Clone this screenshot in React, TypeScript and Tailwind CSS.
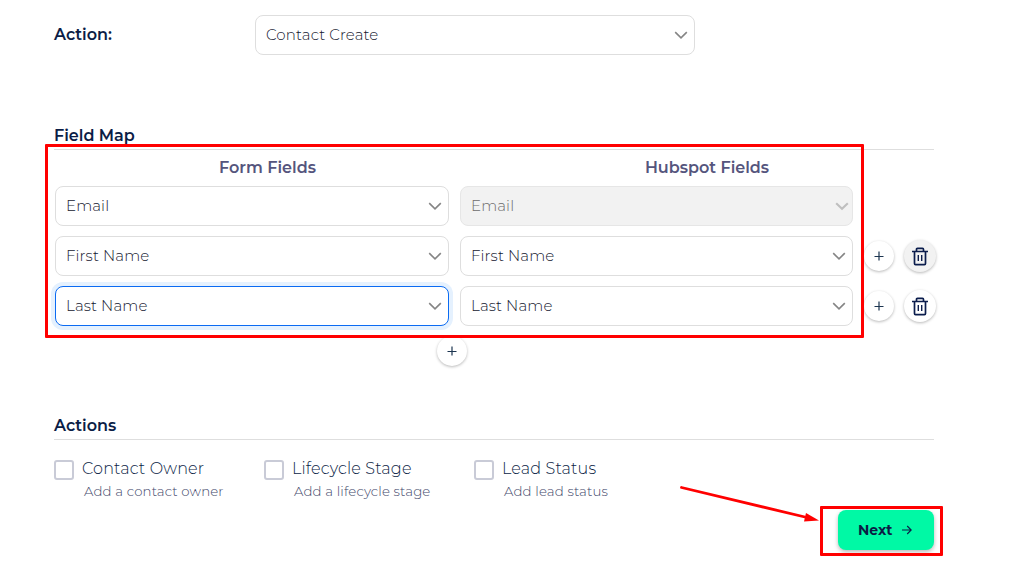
type SelectProps = {
  value: string;
  focused?: boolean;
  disabled?: boolean;
  className: string;
};

const Chevron = ({ disabled = false }: { disabled?: boolean }) => (
  <svg
    width="14"
    height="10"
    viewBox="0 0 14 10"
    fill="none"
    strokeWidth={disabled ? 2.1 : 1.6}
    className={disabled ? 'mr-[3px] text-[#bfbfbf]' : 'mr-1.5 text-[#858585]'}
  >
    <path d="M1.2 2.2 7 7.8l5.8-5.6" stroke="currentColor" />
  </svg>
);

const Select = ({ value, focused = false, disabled = false, className }: SelectProps) => {
  let tone = 'border-[#dedede] bg-white text-[#15182f]';
  if (focused) tone = 'border-[#0b6bf2] bg-white text-[#15182f] shadow-[0_0_0_4px_#e5f1fe]';
  if (disabled) tone = 'border-[#e6e6e6] bg-[#f2f2f2] text-[#6c6c6c]';
  return (
    <button
      className={`flex h-10 shrink-0 items-center justify-between rounded-lg border pl-2.5 text-[15px] font-light tracking-[0.12px] ${tone} ${className}`}
    >
      <span>{value}</span>
      <Chevron disabled={disabled} />
    </button>
  );
};

const PlusButton = ({ className = '' }: { className?: string }) => (
  <button
    className={`flex size-[30px] shrink-0 items-center justify-center rounded-full bg-white text-[#1c3550] shadow-[0_1px_3px_rgba(0,0,0,0.28)] ${className}`}
  >
    <svg width="10" height="10" viewBox="0 0 10 10" stroke="currentColor" strokeWidth="1.2">
      <path d="M5 .5v9M.5 5.5h9" />
    </svg>
  </button>
);

const TrashButton = ({ className }: { className: string }) => (
  <button
    className={`flex size-8 shrink-0 items-center justify-center rounded-full text-[#0b1d4d] shadow-[0_1px_3px_rgba(0,0,0,0.28)] ${className}`}
  >
    <svg width="16" height="20" viewBox="0 0 16 20" fill="none" stroke="currentColor" strokeWidth="1.7">
      <path d="M0 5.5h16M4.5 5.5V3.4q0-1 1-1h5q1 0 1 1v2.1M2.5 5.5v12q0 1.1 1.1 1.1h8.8q1.1 0 1.1-1.1v-12" />
      <path d="M6.3 9v6M9.7 9v6" strokeWidth="1.4" />
    </svg>
  </button>
);

const rows = [
  { label: 'First Name', focused: false, trash: 'bg-[#f2f2f2]' },
  { label: 'Last Name', focused: true, trash: 'bg-white' },
];

const options = [
  { title: 'Contact Owner', note: 'Add a contact owner' },
  { title: 'Lifecycle Stage', note: 'Add a lifecycle stage' },
  { title: 'Lead Status', note: 'Add lead status' },
];

export default function App() {
  return (
    <main className="relative h-[570px] w-[1023px] overflow-hidden bg-white pl-[54px] font-['Montserrat','Inter',sans-serif] text-[#0b1d46]">
      <div className="flex w-[880px] flex-col">
        <div className="mt-[15px] flex h-10 items-center">
          <span className="w-[201px] text-base font-semibold">Action:</span>
          <Select value="Contact Create" className="w-[440px]" />
        </div>

        <h2 className="mt-[70px] h-[25px] border-b border-[#dedede] pt-px text-base leading-5 font-semibold">
          Field Map
        </h2>
        <div className="flex h-9 items-center text-base font-semibold text-[#55557d]">
          <span className="w-[427px] text-center">Form Fields</span>
          <span className="w-[452px] text-center">Hubspot Fields</span>
        </div>
        <div className="flex flex-col gap-2.5 pl-px">
          <div className="flex gap-[11px]">
            <Select value="Email" className="w-[394px]" />
            <Select value="Email" disabled className="w-[393px]" />
          </div>
          {rows.map((row) => (
            <div key={row.label} className="flex items-center">
              <Select value={row.label} focused={row.focused} className="w-[394px]" />
              <Select value={row.label} className="ml-[11px] w-[393px]" />
              <PlusButton className="ml-[11px]" />
              <TrashButton className={`ml-2.5 ${row.trash}`} />
            </div>
          ))}
        </div>
        <PlusButton className="mt-2.5 ml-[383px] pr-px" />

        <h2 className="mt-[49px] h-[25px] border-b border-[#dedede] pt-px text-base leading-5 font-semibold">
          Actions
        </h2>
        <div className="mt-5 flex">
          {options.map((option) => (
            <div key={option.title} className="flex w-[210px]">
              <span className="size-5 shrink-0 rounded-[3px] border-2 border-[#c9cbd7]" />
              <div className="ml-2 -mt-px whitespace-nowrap">
                <div className="text-base leading-5 font-light tracking-[0.15px]">{option.title}</div>
                <div className="mt-0.5 ml-0.5 text-[13.3px] leading-5 font-light tracking-[0.15px] text-[#42476a]">
                  {option.note}
                </div>
              </div>
            </div>
          ))}
        </div>
        <button className="mt-[9px] flex h-10 w-24 items-center self-end rounded-lg bg-[#00f9a5] pl-5 text-sm font-bold shadow-[0_2px_4px_rgba(0,0,0,0.28)]">
          <span>Next</span>
          <svg className="ml-2.5" width="10" height="10" viewBox="0 0 10 10" fill="none" stroke="currentColor" strokeWidth="1.1">
            <path d="M0 5h9.2M5.2 1l4 4-4 4" />
          </svg>
        </button>
      </div>

      <div className="pointer-events-none absolute top-36 left-[45px] h-[194px] w-[819px] rounded-[1px] border-3 border-[#ff0000]" />
      <div className="pointer-events-none absolute top-[506px] left-[820px] h-[50px] w-[123px] rounded-[1px] border-3 border-[#ff0000]" />
      <svg className="pointer-events-none absolute top-[480px] left-[675px]" width="150" height="50" viewBox="0 0 150 50">
        <path d="M6.5 7.5 132 37.5" stroke="#ff0000" strokeWidth="2.8" strokeLinecap="round" />
        <path d="m144 40.5-15 .9 2-8.4z" fill="#ff0000" />
      </svg>
    </main>
  );
}
